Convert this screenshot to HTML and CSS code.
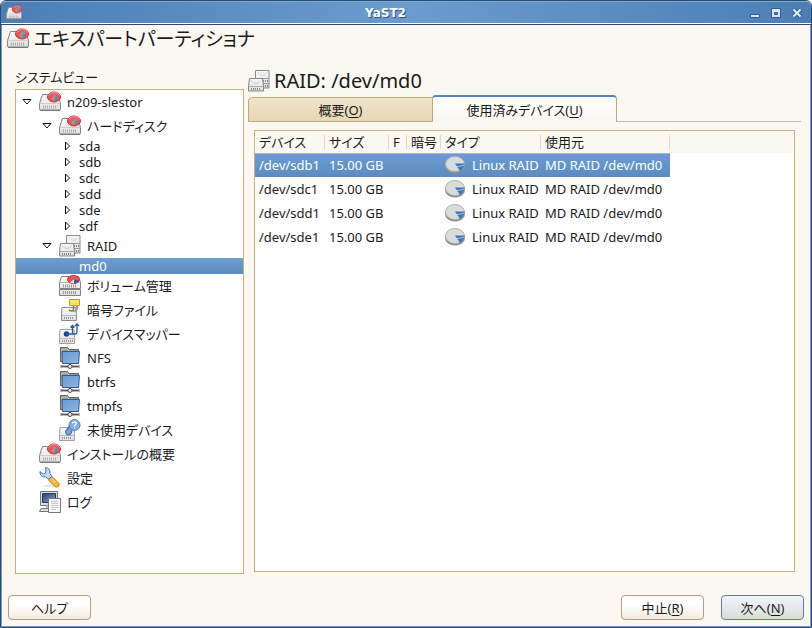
FILE: index.html
```html
<!DOCTYPE html>
<html lang="ja">
<head>
<meta charset="utf-8">
<title>YaST2</title>
<link rel="stylesheet" href="styles.css">
</head>
<body>
<svg class="sprite" aria-hidden="true">
  <defs>
    <linearGradient id="metal" x1="0" y1="0" x2="0" y2="1"><stop offset="0" stop-color="#fbfbfb"/><stop offset="1" stop-color="#dedede"/></linearGradient>
    <linearGradient id="folder-blue" x1="0" y1="0" x2="1" y2="1"><stop offset="0" stop-color="#6597d0"/><stop offset="1" stop-color="#8fb8e4"/></linearGradient>
    <linearGradient id="screen-blue" x1="0" y1="0" x2="1" y2="1"><stop offset="0" stop-color="#23417f"/><stop offset="1" stop-color="#8da3cb"/></linearGradient>
    <symbol id="disk" viewBox="0 0 22 22">
      <path d="M3.500 3.500h15.500l2.500 9v5.500q0 1-1 1h-19q-1 0-1-1v-5.500z" fill="url(#metal)" stroke="#858585"/>
      <path d="M1 12.500h20" stroke="#cfcfcf"/>
      <path d="M4 16h14" stroke="#b0b0b0" stroke-width="3" stroke-dasharray="1 1"/>
      <path d="M1 19.500h20" stroke="#777"/>
      <ellipse cx="15" cy="6" rx="6.500" ry="5" fill="#ef5355" stroke="#d02a30"/>
      <path d="M9.500 4.500q2-3 6-3t5 3" fill="none" stroke="#f9a09f"/>
      <path d="M14 6V3.500l3.500 0 .500 2.500z" fill="#9a8fa5"/>
      <path d="M12.500 6h3.500v4l-3-1z" fill="#83a873"/>
      <path d="M16 6l3.500.5q-.5 2.500-3.500 3.500z" fill="#5f83bb"/>
    </symbol>
    <symbol id="raid" viewBox="0 0 22 22">
      <path d="M7.500.5h13.500v17.500h-13.500z" fill="url(#metal)" stroke="#8a8a8a"/>
      <path d="M8 8.500h13M8 13.500h13" stroke="#999"/>
      <path d="M15 11h5M15 16h5" stroke="#888" stroke-width="2" stroke-dasharray="1 1"/>
      <path d="M9.500 2q5 7 10 0" fill="#eee" stroke="#d5d5d5"/>
      <path d="M1.500 8.500h13l1 8v4.500H.5v-4.500z" fill="url(#metal)" stroke="#858585"/>
      <path d="M1 16.500h14" stroke="#aaa"/>
      <path d="M3 19h10" stroke="#888" stroke-width="2" stroke-dasharray="1 1"/>
      <path d="M3 10.500q5 6 10 0" fill="#eee" stroke="#ccc"/>
    </symbol>
    <symbol id="volume" viewBox="0 0 22 22">
      <path d="M2.500 1.500h17l2 6v6H.5v-6zM.5 14.500h21v6H.5z" fill="url(#metal)" stroke="#808080"/>
      <path d="M1 7.500h20" stroke="#bbb"/>
      <path d="M4 11h14M4 17.500h14" stroke="#999" stroke-width="3" stroke-dasharray="1 1"/>
      <ellipse cx="14.500" cy="4.500" rx="6" ry="4" fill="#ef5355" stroke="#d02a30"/>
      <path d="M15 4.500l5 1q-1 3-5 3z" fill="#3c5a9c"/>
      <path d="M15 4.500v4l-4-1z" fill="#e6edf7"/>
    </symbol>
    <symbol id="crypt" viewBox="0 0 22 22">
      <path d="M3 8.500h14l.5 7v6h-15v-6z" fill="url(#metal)" stroke="#8a8a8a"/>
      <path d="M3 16.500h14" stroke="#bbb"/>
      <path d="M5 19h10" stroke="#999" stroke-width="2" stroke-dasharray="1 1"/>
      <path d="M14.500 7v3q0 2-2 2t-2-1.500" fill="none" stroke="#777" stroke-width="1.500"/>
      <path d="M18 7v2q0 3-4 3" fill="none" stroke="#999" stroke-width="2"/>
      <path d="M10.500.5h10v6h-10z" fill="#f7e060" stroke="#c0a420"/>
      <path d="M12 2.500h7" stroke="#fff6a2"/>
    </symbol>
    <symbol id="mapper" viewBox="0 0 22 22">
      <path d="M1 6.500h14l.5 8v6H.5v-6z" fill="url(#metal)" stroke="#a0a0a0"/>
      <path d="M1 15.500h15" stroke="#bbb"/>
      <path d="M3 18h11" stroke="#999" stroke-width="2" stroke-dasharray="1 1"/>
      <circle cx="7.500" cy="11" r="2.800" fill="#174a96"/>
      <path d="M7 11h9.500q1.500 0 1.500-2V2M13.500 11V3M11.500 4.500l2-2 2 2M16 3l2-2 2 2" fill="none" stroke="#245aa5" stroke-width="1.300"/>
    </symbol>
    <symbol id="folder" viewBox="0 0 22 22">
      <path d="M1.500 14.500v-14h7l2 2h9v12z" fill="#9a9a96" stroke="#606060"/>
      <path d="M3 14V2h5l2 2" fill="none" stroke="#c4c4c0"/>
      <path d="M3 4.500h17.500l-1 12h-16z" fill="url(#folder-blue)" stroke="#2c5c96"/>
      <path d="M1 19.500h20" stroke="#bbb" stroke-width="3"/>
      <path d="M2 19.500h18" stroke="#555"/>
      <path d="M11 17v3" stroke="#555" stroke-width="2"/>
      <circle cx="11" cy="19.500" r="2" fill="#eee" stroke="#444"/>
    </symbol>
    <symbol id="unused" viewBox="0 0 22 22">
      <path d="M1 8.500h14l.5 7v6H.5v-6z" fill="url(#metal)" stroke="#a0a0a0"/>
      <path d="M1 16.500h14" stroke="#bbb"/>
      <path d="M3 19h10" stroke="#999" stroke-width="2" stroke-dasharray="1 1"/>
      <path d="M12 9l-2.500 3.500" stroke="#3d6cad" stroke-width="6"/>
      <circle cx="9.500" cy="13" r="3" fill="#78a4dd" stroke="#3d6cad"/>
      <path d="M12.500 9l-2.500 3" stroke="#78a4dd" stroke-width="4"/>
      <circle cx="15.500" cy="6" r="5.500" fill="#82ace2" stroke="#4f7fc0"/>
      <path d="M13.500 4.500q0-1.500 2-1.500t2 1.500q0 1-2 2v1M15.500 8.500v1" fill="none" stroke="#fff" stroke-width="1.300"/>
    </symbol>
    <symbol id="settings" viewBox="0 0 22 22">
      <ellipse cx="12" cy="19" rx="8" ry="1.500" fill="#e5e5e5"/>
      <path d="M12.500 12.500l5 5" stroke="#d98309" stroke-width="6" stroke-linecap="round"/>
      <path d="M12.500 12.500l5 5" stroke="#fcb840" stroke-width="4" stroke-linecap="round"/>
      <path d="M13 11.500l4 4" stroke="#ffe09a"/>
      <path d="M6.500.5q5 .5 4.500 6l2 3-3.500 2.500-3-2Q.5 10 1 4.500l3 2.500q3 0 3-3z" fill="#c5daf2" stroke="#4678b5"/>
    </symbol>
    <symbol id="log" viewBox="0 0 22 22">
      <path d="M1.500.5h17v14h-17z" fill="#ddd" stroke="#777"/>
      <path d="M3.500 2.500h13v9h-13z" fill="url(#screen-blue)" stroke="#23395f"/>
      <path d="M7 14.500h6v3H7z" fill="#bbb"/>
      <path d="M2 17.500h9v3H.5z" fill="#ddd" stroke="#777"/>
      <path d="M9.500 7.500h12v14h-12z" fill="#f8f8f8" stroke="#777"/>
      <path d="M12 10.500h7M12 12.500h7M12 14.500h7M12 16.500h7M12 18.500h5" stroke="#c6c6c6"/>
    </symbol>
    <symbol id="partition" viewBox="0 0 22 22">
      <ellipse cx="11" cy="12" rx="10" ry="7.500" fill="#8c918f"/>
      <ellipse cx="11" cy="10" rx="9.500" ry="7.500" fill="#d9dcd8" stroke="#b0b4af"/>
      <path d="M11 9.500l9.500 0q.5 4-4.500 7.500z" fill="#3f76bd"/>
      <path d="M13 12.500q4 0 7-1.500" fill="none" stroke="#a9c8ee"/>
    </symbol>
    <symbol id="open" viewBox="0 0 10 10"><path d="M1 2.500h8L5 7z" fill="#fff" stroke="#111"/></symbol>
    <symbol id="closed" viewBox="0 0 10 10"><path d="M2.500 1v8L6.500 5z" fill="#fff" stroke="#111"/></symbol>
  </defs>
</svg>

<div class="window">
  <header class="titlebar">
    <svg class="app-icon"><use href="#disk"/></svg>
    <span class="window-title">YaST2</span>
    <div class="window-controls">
      <button type="button" aria-label="最小化"><svg viewBox="0 0 12 12"><path d="M1.500 7.500h9v3h-9z" fill="#d7e4f3" stroke="#365b8a"/></svg></button>
      <button type="button" aria-label="最大化"><svg viewBox="0 0 12 12"><path d="M1.500 1.500h9v9h-9z" fill="#d7e4f3" stroke="#365b8a"/><path d="M4.500 5.500h3v2h-3z" fill="#5788bf" stroke="#365b8a"/></svg></button>
      <button type="button" aria-label="閉じる"><svg viewBox="0 0 12 12"><path d="M2.500 2.500l7 7m0-7l-7 7" stroke="#365b8a" stroke-width="4"/><path d="M2.500 2.500l7 7m0-7l-7 7" stroke="#e3edf8" stroke-width="2"/></svg></button>
    </div>
  </header>

  <h1 class="heading page-heading"><svg class="icon"><use href="#disk"/></svg>エキスパートパーティショナ</h1>

  <main class="content">
    <nav class="sidebar" aria-labelledby="tree-label">
      <h2 class="tree-label" id="tree-label">システムビュー</h2>
      <ul class="tree">
        <li>
          <div class="node"><svg class="arrow"><use href="#open"/></svg><svg class="icon"><use href="#disk"/></svg>n209-slestor</div>
          <ul>
            <li>
              <div class="node"><svg class="arrow"><use href="#open"/></svg><svg class="icon"><use href="#disk"/></svg>ハードディスク</div>
              <ul>
                <li class="node leaf"><svg class="arrow"><use href="#closed"/></svg>sda</li>
                <li class="node leaf"><svg class="arrow"><use href="#closed"/></svg>sdb</li>
                <li class="node leaf"><svg class="arrow"><use href="#closed"/></svg>sdc</li>
                <li class="node leaf"><svg class="arrow"><use href="#closed"/></svg>sdd</li>
                <li class="node leaf"><svg class="arrow"><use href="#closed"/></svg>sde</li>
                <li class="node leaf"><svg class="arrow"><use href="#closed"/></svg>sdf</li>
              </ul>
            </li>
            <li>
              <div class="node"><svg class="arrow"><use href="#open"/></svg><svg class="icon"><use href="#raid"/></svg>RAID</div>
              <ul>
                <li class="node leaf selected"><span class="arrow"></span>md0</li>
              </ul>
            </li>
            <li class="node"><span class="arrow"></span><svg class="icon"><use href="#volume"/></svg>ボリューム管理</li>
            <li class="node"><span class="arrow"></span><svg class="icon"><use href="#crypt"/></svg>暗号ファイル</li>
            <li class="node"><span class="arrow"></span><svg class="icon"><use href="#mapper"/></svg>デバイスマッパー</li>
            <li class="node"><span class="arrow"></span><svg class="icon"><use href="#folder"/></svg>NFS</li>
            <li class="node"><span class="arrow"></span><svg class="icon"><use href="#folder"/></svg>btrfs</li>
            <li class="node"><span class="arrow"></span><svg class="icon"><use href="#folder"/></svg>tmpfs</li>
            <li class="node"><span class="arrow"></span><svg class="icon"><use href="#unused"/></svg>未使用デバイス</li>
          </ul>
        </li>
        <li class="node"><span class="arrow"></span><svg class="icon"><use href="#disk"/></svg>インストールの概要</li>
        <li class="node"><span class="arrow"></span><svg class="icon"><use href="#settings"/></svg>設定</li>
        <li class="node"><span class="arrow"></span><svg class="icon"><use href="#log"/></svg>ログ</li>
      </ul>
    </nav>

    <section class="detail">
      <h2 class="heading detail-heading"><svg class="icon"><use href="#raid"/></svg>RAID: /dev/md0</h2>
      <div class="tabs" role="tablist">
        <button type="button" class="tab" role="tab" aria-selected="false">概要(<u>O</u>)</button>
        <button type="button" class="tab active" role="tab" aria-selected="true">使用済みデバイス(<u>U</u>)</button>
      </div>
      <div class="panel">
        <table class="devices">
          <colgroup><col class="c-device"><col class="c-size"><col class="c-format"><col class="c-crypt"><col class="c-type"><col class="c-used"></colgroup>
          <thead>
            <tr><th>デバイス</th><th>サイズ</th><th>F</th><th>暗号</th><th>タイプ</th><th>使用元</th></tr>
          </thead>
          <tbody>
            <tr class="selected"><td>/dev/sdb1</td><td>15.00 GB</td><td></td><td></td><td><span class="type"><svg class="icon"><use href="#partition"/></svg>Linux RAID</span></td><td>MD RAID /dev/md0</td></tr>
            <tr><td>/dev/sdc1</td><td>15.00 GB</td><td></td><td></td><td><span class="type"><svg class="icon"><use href="#partition"/></svg>Linux RAID</span></td><td>MD RAID /dev/md0</td></tr>
            <tr><td>/dev/sdd1</td><td>15.00 GB</td><td></td><td></td><td><span class="type"><svg class="icon"><use href="#partition"/></svg>Linux RAID</span></td><td>MD RAID /dev/md0</td></tr>
            <tr><td>/dev/sde1</td><td>15.00 GB</td><td></td><td></td><td><span class="type"><svg class="icon"><use href="#partition"/></svg>Linux RAID</span></td><td>MD RAID /dev/md0</td></tr>
          </tbody>
        </table>
      </div>
    </section>
  </main>

  <footer class="actions">
    <button type="button" class="btn">ヘルプ</button>
    <span class="spacer"></span>
    <button type="button" class="btn">中止(<u>R</u>)</button>
    <button type="button" class="btn default">次へ(<u>N</u>)</button>
  </footer>
</div>
</body>
</html>
```
FILE: styles.css
```css
* { box-sizing: border-box; }

body {
  margin: 0;
  background: #fff;
  color: #1a1a1a;
  font: 13px/16px "Noto Sans", "Noto Sans CJK JP", sans-serif;
  font-feature-settings: "palt";
}

h1, h2, ul { margin: 0; padding: 0; font-weight: 400; }
ul { list-style: none; }
button { font: inherit; font-feature-settings: inherit; color: inherit; }
u { text-underline-offset: 2px; }

.sprite { position: absolute; width: 0; height: 0; }
.icon { flex: none; width: 22px; height: 22px; }

.window {
  display: flex;
  flex-direction: column;
  min-height: 100vh;
  border: 1px solid #2c4a6e;
  border-radius: 6px 6px 0 0;
  box-shadow: inset 1px 0 #6f9fd3, inset -1px 0 #6f9fd3, inset 0 -1px #6f9fd3;
  background: #fbf8f1;
}

.titlebar {
  display: flex;
  align-items: center;
  height: 24px;
  padding: 0 8px 0 5px;
  border-top: 1px solid #7fabdb;
  border-bottom: 1px solid #2c4a6e;
  border-radius: 5px 5px 0 0;
  background: linear-gradient(90deg, #4b7eb5, #6a9ccf 50%, #4b7eb5);
  box-shadow: inset 0 -1px #fff;
}
.app-icon { width: 16px; height: 16px; }
.window-title {
  flex: 1;
  color: #fff;
  font: bold 12px/16px "DejaVu Sans", sans-serif;
  text-align: center;
  text-shadow: 1px 1px #2f5585;
}
.window-controls { display: flex; gap: 9px; }
.window-controls button { width: 12px; height: 12px; padding: 0; border: 0; background: none; }
.window-controls svg { display: block; width: 12px; height: 12px; }

.heading {
  display: flex;
  align-items: center;
  gap: 5px;
  font-size: 19px;
  line-height: 24px;
}
.page-heading { padding: 2px 7px 0 6px; }
.detail-heading { gap: 4px; font-size: 20px; }

.content {
  display: grid;
  flex: 1;
  grid-template-columns: 229px 1fr;
  gap: 4px;
  padding: 18px 10px 0 14px;
}
.sidebar { display: flex; flex-direction: column; }
.tree-label { padding-bottom: 4px; font-size: 13px; line-height: 16px; }

.tree {
  flex: 1;
  border: 1px solid #c4b182;
  background: #fff;
}
.node {
  display: flex;
  align-items: center;
  height: 24px;
  padding-left: 6px;
}
.tree .node .icon { margin: 0 6px 0 7px; }
.arrow { flex: none; width: 10px; height: 10px; }
.tree ul .node { padding-left: 26px; }
.tree ul ul .node { height: 16px; padding-left: 47px; gap: 6px; }
.node.selected { color: #fff; background: linear-gradient(#6b9ed2, #5b8bc1); }

.detail { display: flex; flex-direction: column; }
.tabs {
  display: flex;
  align-items: flex-end;
  height: 29px;
  box-shadow: inset 0 -1px #bbb8b0;
}
.tab {
  width: 185px;
  height: 25px;
  padding: 0;
  border: 1px solid #c0a974;
  border-radius: 4px 0 0 0;
  background: linear-gradient(#efe4cb, #e6d8b6);
}
.tab.active {
  height: 27px;
  margin-left: -1px;
  border-top: 2px solid #4f86c6;
  border-bottom: 0;
  border-radius: 4px 4px 0 0;
  background: linear-gradient(#fff, #fbf8f1);
}

.panel {
  flex: 1;
  margin: 8px 6px 2px;
  border: 1px solid #c4b182;
  background: linear-gradient(#fbf8f1, #fbf8f1) 0 0 / 100% 22px no-repeat #fff;
}
.devices { width: 415px; border-collapse: collapse; table-layout: fixed; }
.c-device { width: 70px; }
.c-size { width: 64px; }
.c-format { width: 18px; }
.c-crypt { width: 34px; }
.c-type { width: 100px; }
.devices th {
  height: 22px;
  padding: 0 0 0 4px;
  border-bottom: 1px solid #c9b47d;
  background: linear-gradient(#e6d9b8, #e6d9b8) right center / 1px 14px no-repeat;
  font-weight: 400;
  text-align: left;
  white-space: nowrap;
}
.devices td { height: 24px; padding: 0 0 0 4px; white-space: nowrap; }
.devices .selected { color: #fff; background: linear-gradient(#6b9ed2, #5b8bc1); }
.type { display: flex; align-items: center; gap: 6px; }
.type .icon { margin-left: -1px; }

.actions {
  display: flex;
  gap: 17px;
  padding: 21px 7px 7px;
}
.spacer { flex: 1; }
.btn {
  width: 83px;
  height: 25px;
  padding: 0;
  border: 1px solid #b3a079;
  border-radius: 4px;
  background: linear-gradient(#fff 40%, #f2ebdc);
}
.btn.default {
  border-color: #5e7da3;
  background: linear-gradient(#f1f5fa, #e3e7ea 60%, #dddcd3);
}
```
